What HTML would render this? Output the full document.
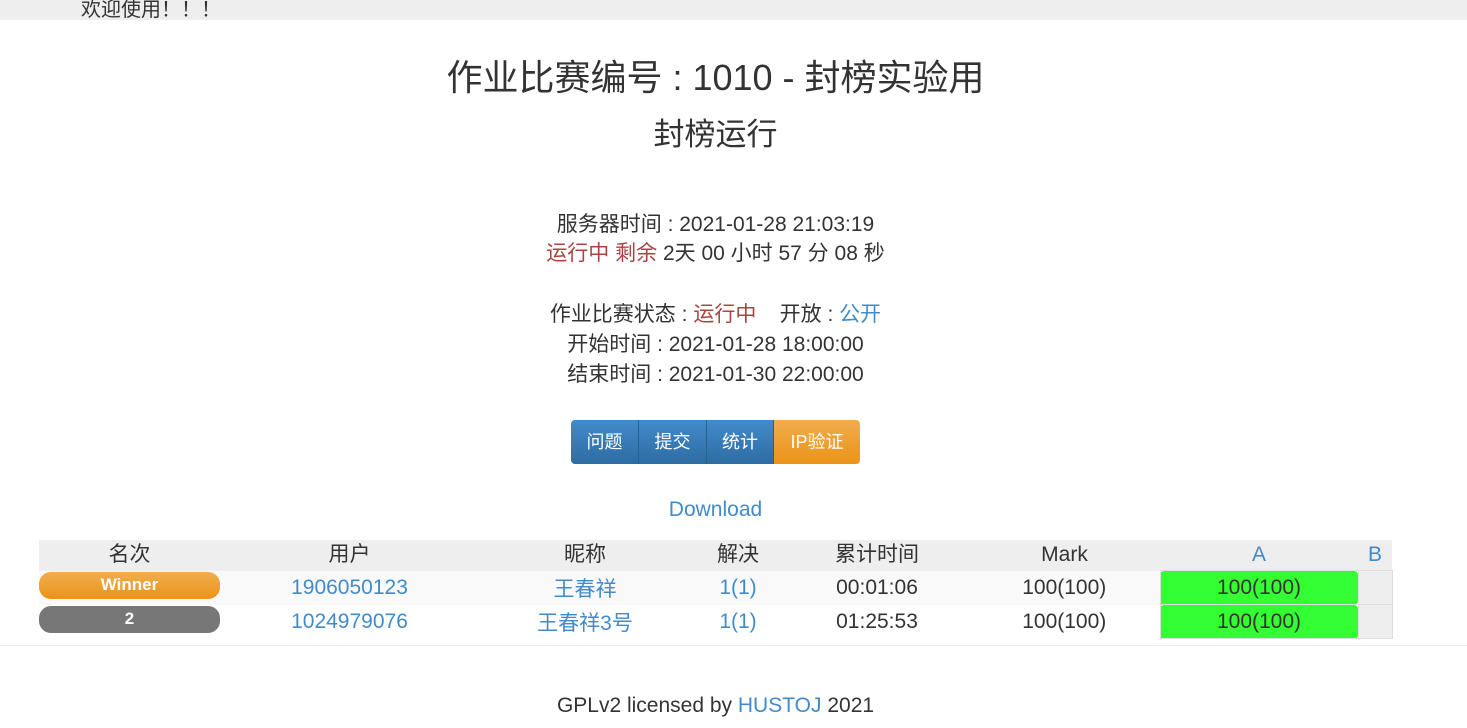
<!DOCTYPE html>
<html><head><meta charset="utf-8"><style>
body{margin:0;width:1467px;height:728px;background:#fff;font-family:"Liberation Sans","Noto Sans CJK SC",sans-serif;color:#333;font-size:21px;position:relative;overflow:hidden}
.top{height:20px;background:#eee;position:relative}
.top span{position:absolute;left:81px;top:-7px;font-size:20px}
.c{position:absolute;left:0;width:1431px;text-align:center}
a{color:#428bca;text-decoration:none}
.red{color:#a94442}
.btns{position:absolute;left:571px;top:420px;display:flex;height:44px;border-radius:4px;overflow:hidden}
.btns div{color:#fff;font-size:18px;line-height:44px;text-align:center;background:linear-gradient(#428bca,#2d6ca2);border-right:1px solid #2a5f8e}
.btns .o{background:linear-gradient(#f0ad4e,#eb9316);border:none}
table{position:absolute;left:39px;top:540px;border-collapse:collapse;font-size:21px}
td{padding:0;text-align:center}
.h td{background:#eee;height:30px;line-height:28px}
.r1 td{background:#f9f9f9;height:33px}
.r2 td{height:33px}
.pill{display:block;height:27px;border-radius:12px;color:#fff;font-weight:bold;font-size:17px;line-height:25px;margin-top:-4px}
td.g{background:#33ff33;border:1px solid #ddd;border-radius:4px}
td.e{background:#eee;border:1px solid #ddd}
</style></head><body>
<div class="top"><span>欢迎使用！！！</span></div>
<div class="c" style="top:55px;font-size:36px;line-height:46px">作业比赛编号 : 1010 - 封榜实验用</div>
<div class="c" style="top:114px;font-size:31px;line-height:42px">封榜运行</div>
<div class="c" style="top:211px;line-height:28px">服务器时间 : 2021-01-28 21:03:19</div>
<div class="c" style="top:240px;line-height:28px"><span class="red">运行中 剩余</span> 2天 00 小时 57 分 08 秒</div>
<div class="c" style="top:301px;line-height:28px">作业比赛状态 : <span class="red">运行中</span> &nbsp;&nbsp; 开放 : <a>公开</a></div>
<div class="c" style="top:331px;line-height:28px">开始时间 : 2021-01-28 18:00:00</div>
<div class="c" style="top:361px;line-height:28px">结束时间 : 2021-01-30 22:00:00</div>
<div class="btns"><div style="width:67px">问题</div><div style="width:67px">提交</div><div style="width:66px">统计</div><div class="o" style="width:86px">IP验证</div></div>
<div class="c" style="top:497px;line-height:26px"><a>Download</a></div>
<table>
<tr class="h"><td style="width:181px">名次</td><td style="width:259px">用户</td><td style="width:212px">昵称</td><td style="width:94px">解决</td><td style="width:184px">累计时间</td><td style="width:191px">Mark</td><td style="width:198px"><a>A</a></td><td style="width:34px"><a>B</a></td></tr>
<tr class="r1"><td><span class="pill" style="background:linear-gradient(#f0ad4e,#eb9316)">Winner</span></td><td><a>1906050123</a></td><td><a>王春祥</a></td><td><a>1(1)</a></td><td>00:01:06</td><td>100(100)</td><td class="g">100(100)</td><td class="e"></td></tr>
<tr class="r2"><td><span class="pill" style="background:#777">2</span></td><td><a>1024979076</a></td><td><a>王春祥3号</a></td><td><a>1(1)</a></td><td>01:25:53</td><td>100(100)</td><td class="g">100(100)</td><td class="e"></td></tr>
</table>
<div style="position:absolute;left:0;top:645px;width:1467px;border-top:1px solid #eee"></div>
<div class="c" style="top:693px;line-height:26px">GPLv2 licensed by <a>HUSTOJ</a> 2021</div>
</body></html>
